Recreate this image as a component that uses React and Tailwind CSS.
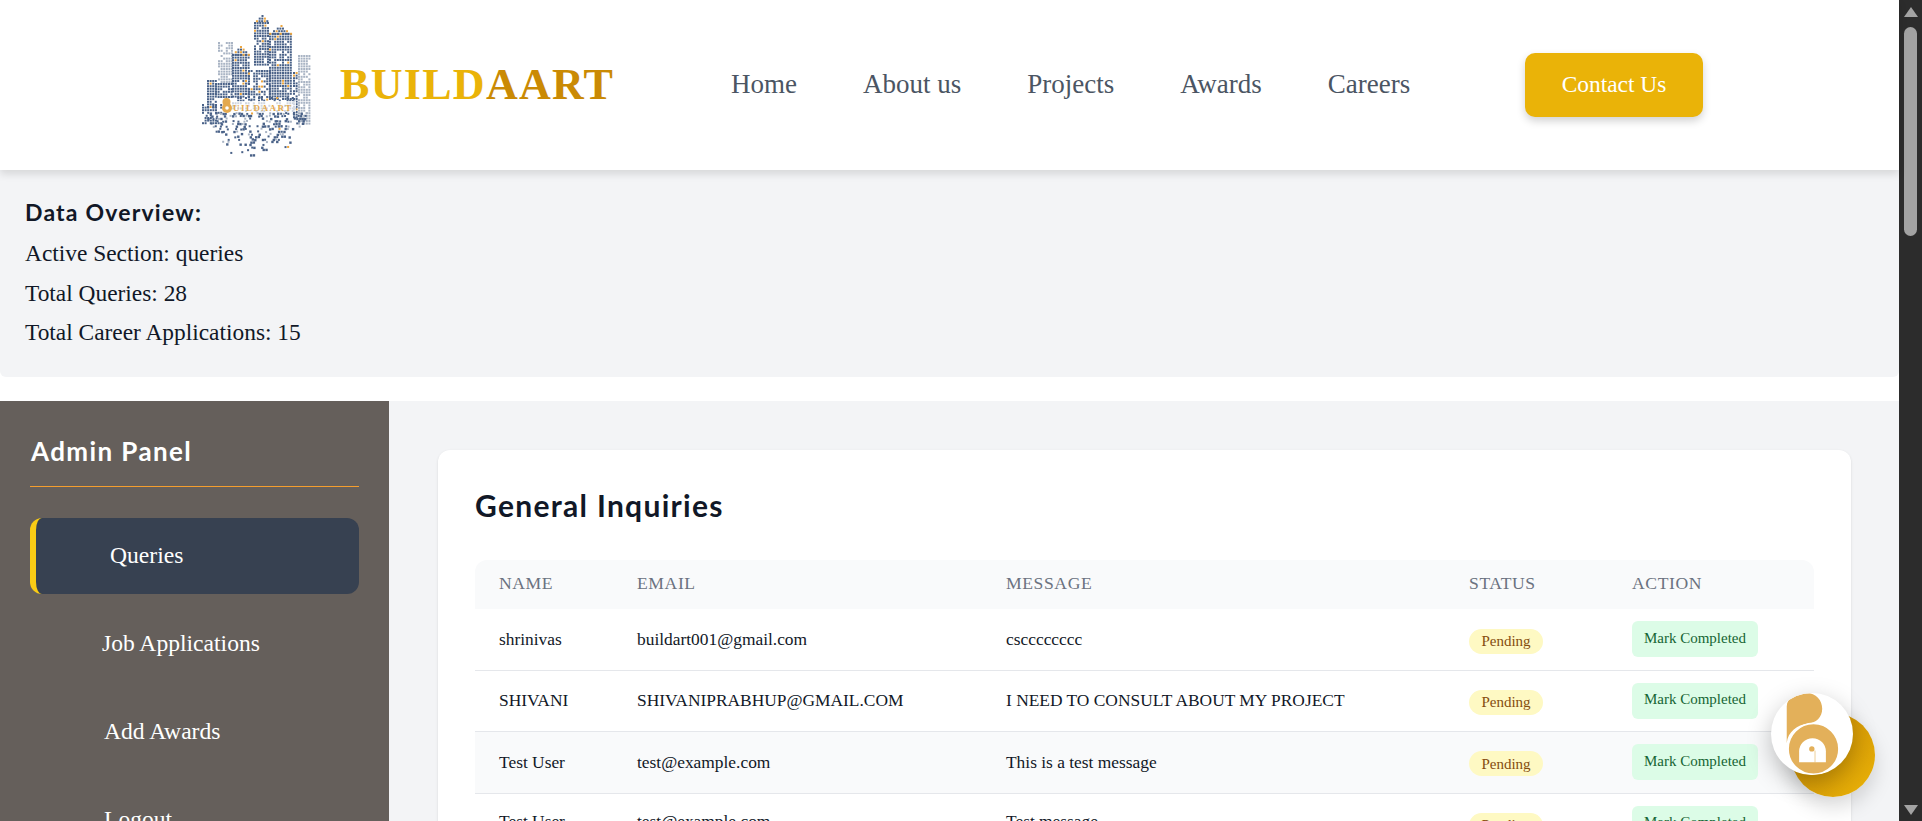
import React from "react";

function makeDots() {
  let seed = 12345;
  const rnd = () => {
    seed = (seed * 16807) % 2147483647;
    return seed / 2147483647;
  };
  const dots = [];
  const step = 2.6;
  const blue = "#4a6288";
  const pale = "#a9b4c4";
  const orange = "#eda63f";
  const blocks = [
    [218, 42, 232, 83, pale, 0.78],
    [298, 55, 311, 123, pale, 0.85],
    [254, 22, 269, 66, blue, 0.9],
    [269, 33, 292, 100, blue, 0.92],
    [232, 54, 248, 97, blue, 0.94],
    [293, 72, 298, 118, blue, 0.85],
    [215, 83, 232, 97, blue, 0.88],
    [207, 80, 215, 108, blue, 0.85],
    [248, 70, 269, 100, blue, 0.72],
    [232, 97, 296, 112, blue, 0.5],
    [202, 104, 222, 124, blue, 0.65],
  ];
  blocks.forEach(([x0, y0, x1, y1, c, d]) => {
    for (let y = y0; y < y1; y += step) {
      for (let x = x0; x < x1; x += step) {
        if (rnd() < d) {
          const isOrange = c === blue && rnd() < 0.035;
          dots.push([x, y, isOrange ? orange : c, 2]);
        }
      }
    }
  });
  [[254, 22, 269, 15], [269, 33, 292, 25], [232, 54, 248, 46]].forEach(([x0, y0, x1, top]) => {
    const mid = (x0 + x1) / 2;
    for (let y = top; y < y0; y += step) {
      const half = ((y - top) / (y0 - top)) * (x1 - x0) * 0.5;
      for (let x = mid - half; x <= mid + half; x += step) {
        dots.push([x, y, rnd() < 0.3 ? orange : blue, 2]);
      }
    }
  });
  for (let y = 112; y < 155; y += step) {
    const t = (y - 112) / 43;
    const d = 0.55 * (1 - t) + 0.06;
    const spread = 52 - t * 26;
    for (let x = 256 - spread; x < 256 + spread; x += step) {
      if (rnd() < d) {
        const r = rnd();
        dots.push([x + rnd(), y + rnd(), r < 0.03 ? orange : r < 0.2 ? pale : blue, r < 0.5 ? 2 : 2.4]);
      }
    }
  }
  return dots;
}

const DOTS = makeDots();

function CityLogo() {
  return (
    <svg width="125" height="150" viewBox="195 10 125 150" className="shrink-0">
      {DOTS.map(([x, y, c, s], i) => (
        <rect key={i} x={x} y={y} width={s} height={s} fill={c} />
      ))}
      <rect x="230" y="101" width="66" height="11" fill="#fff" opacity="0.75" />
      <circle cx="226.500" cy="102" r="4" fill="#e3a94f" />
      <circle cx="227" cy="108" r="5" fill="#e3a94f" />
      <circle cx="227" cy="108" r="1.800" fill="#fff" />
      <text x="233" y="111" fontSize="9" letterSpacing="1.500" fontFamily="Liberation Serif, serif" fontWeight="700" fill="#e3a94f">
        UILDAART
      </text>
    </svg>
  );
}

function BaLogo() {
  return (
    <svg viewBox="0 0 245 245" className="h-full w-full">
      <defs>
        <clipPath id="ba-clip">
          <circle cx="122.500" cy="122.500" r="122.500" />
        </clipPath>
      </defs>
      <g clipPath="url(#ba-clip)">
        <path d="M47 150 L47 40 C47 15 75 0 105 0 C135 0 153 22 153 47 C153 72 135 90 108 92 C80 95 50 115 47 150 Z" fill="#e3b05a" />
        <circle cx="127" cy="167" r="76" fill="#e3b05a" stroke="#fff" strokeWidth="5" />
        <path d="M84 207 L84 175 A40 40 0 0 1 164 175 L164 207 Z" fill="#fff" />
        <circle cx="122" cy="167" r="8" fill="#e3b05a" />
        <rect x="130" y="172" width="3" height="35" fill="#e3b05a" opacity="0.6" />
      </g>
    </svg>
  );
}

const NAV = ["Home", "About us", "Projects", "Awards", "Careers"];

const ROWS = [
  { name: "shrinivas", email: "buildart001@gmail.com", message: "cscccccccc", row: "h-[61px]", cell: "px-6" },
  { name: "SHIVANI", email: "SHIVANIPRABHUP@GMAIL.COM", message: "I NEED TO CONSULT ABOUT MY PROJECT", row: "h-[61px]", cell: "px-6" },
  { name: "Test User", email: "test@example.com", message: "This is a test message", row: "h-[62px] bg-[#f9fafb]", cell: "px-6" },
  { name: "Test User", email: "test@example.com", message: "Test message", row: "h-[61px]", cell: "px-6 pb-[4px]" },
];

const SIDE = [
  { label: "Job Applications", pad: "pl-[72px]" },
  { label: "Add Awards", pad: "pl-[74px]" },
  { label: "Logout", pad: "pl-[74px]" },
];

const SERIF = "font-['Liberation_Serif',serif]";
const HEAD = "font-['Lato',sans-serif]";

export default function App() {
  return (
    <div className={`relative flex h-[821px] w-[1922px] overflow-hidden bg-white ${SERIF}`}>
      <div className="flex w-[1899px] shrink-0 flex-col">
        <header className="relative z-10 flex h-[170px] shrink-0 items-center bg-white pl-[195px] shadow-[0_4px_8px_rgba(0,0,0,0.12)]">
          <CityLogo />
          <div className="ml-[20px] w-[285px] text-[44px] font-bold leading-none tracking-[1.3px]">
            <span className="text-[#eab308]">BUILD</span>
            <span className="text-[#ca8a04]">AART</span>
          </div>
          <nav className="ml-[106px] flex w-[678px] gap-[66px] whitespace-nowrap pb-[2px] text-[27px] text-[#4b5563]">
            {NAV.map((n) => (
              <span key={n} className="shrink-0">{n}</span>
            ))}
          </nav>
          <button className="ml-[116px] h-[64px] w-[178px] rounded-[10px] bg-[#eab308] text-[23.4px] text-white shadow-[0_4px_8px_rgba(0,0,0,0.18)]">
            Contact Us
          </button>
        </header>

        <section className="h-[207px] shrink-0 rounded-b-md bg-[#f3f4f6] px-[25px] pt-[29px] text-[23.4px] leading-[40px] text-[#111827]">
          <h2 className={`${HEAD} mb-[8px] text-[23px] font-bold leading-[26px] tracking-[1.2px]`}>Data Overview:</h2>
          <p>Active Section: queries</p>
          <p>Total Queries: 28</p>
          <p className="-translate-y-px">Total Career Applications: 15</p>
        </section>

        <div className="mt-[24px] flex min-h-0 flex-1 overflow-hidden">
          <aside className="w-[389px] shrink-0 bg-[#655f5b] px-[30px] pt-[34px] text-white">
            <h2 className={`${HEAD} pl-px text-[26px] font-bold leading-[32px] tracking-[1.4px]`}>Admin Panel</h2>
            <div className="mt-[19px] h-px bg-[#f59e2e]" />
            <div className="mt-[31px] flex h-[76px] items-center rounded-xl border-l-[6px] border-[#facc15] bg-[#374151] pl-[74px] text-[23.6px]">
              Queries
            </div>
            <div className="mt-[12px] flex flex-col">
              {SIDE.map((s) => (
                <div key={s.label} className={`mb-[12px] flex h-[76px] items-center text-[23.6px] ${s.pad}`}>
                  {s.label}
                </div>
              ))}
            </div>
          </aside>

          <main className="flex-1 bg-[#f3f4f6] px-[49px] pt-[49px]">
            <div className="h-[600px] rounded-xl bg-white px-[37px] pt-[37px] shadow-sm">
              <h1 className={`${HEAD} text-[30px] font-bold leading-[36px] tracking-[1.3px] text-[#111827]`}>General Inquiries</h1>
              <table className="mt-[37px] w-[1339px] table-fixed border-collapse text-left">
                <colgroup>
                  <col className="w-[138px]" />
                  <col className="w-[369px]" />
                  <col className="w-[463px]" />
                  <col className="w-[163px]" />
                  <col className="w-[206px]" />
                </colgroup>
                <thead>
                  <tr className="h-[49px] text-[17.6px] uppercase tracking-[0.6px] text-[#6b7280]">
                    {["Name", "Email", "Message", "Status", "Action"].map((h, i) => (
                      <th
                        key={h}
                        className={`bg-[#f9fafb] px-6 pb-[2px] font-normal ${i === 0 ? "rounded-tl-xl" : ""} ${i === 4 ? "rounded-tr-xl" : ""}`}
                      >
                        {h}
                      </th>
                    ))}
                  </tr>
                </thead>
                <tbody className="text-[17.4px] text-[#111827]">
                  {ROWS.map((r, i) => (
                    <tr key={i} className={`border-b border-[#e5e7eb] ${r.row}`}>
                      <td className={r.cell}>{r.name}</td>
                      <td className={r.cell}>{r.email}</td>
                      <td className={r.cell}>{r.message}</td>
                      <td className="px-6">
                        <span className="inline-flex h-[25px] w-[74px] translate-y-[1px] items-center justify-center rounded-full bg-[#fef9c3] text-[15px] text-[#854d0e]">
                          Pending
                        </span>
                      </td>
                      <td className="px-6">
                        <span className="inline-flex h-[36px] w-[126px] items-center justify-center rounded-md bg-[#dcfce7] pb-[2px] text-[15px] text-[#166534]">
                          Mark Completed
                        </span>
                      </td>
                    </tr>
                  ))}
                </tbody>
              </table>
            </div>
          </main>
        </div>
      </div>

      <div className="relative flex-1 bg-[#2c2c2c]">
        <div className="absolute left-[5px] top-[7px] h-0 w-0 border-x-[7px] border-b-[10px] border-x-transparent border-b-[#a3a3a3]" />
        <div className="absolute left-[5px] top-[27px] h-[209px] w-[13px] rounded-full bg-[#a3a3a3]" />
        <div className="absolute bottom-[6px] left-[5px] h-0 w-0 border-x-[7px] border-t-[10px] border-x-transparent border-t-[#a3a3a3]" />
      </div>

      <div className="absolute left-[1791px] top-[713px] h-[84px] w-[84px] rounded-full bg-gradient-to-br from-[#ca8a04] to-[#eab308] shadow-[0_10px_20px_rgba(0,0,0,0.15)]" />
      <div className="absolute left-[1771px] top-[693px] h-[82px] w-[82px] overflow-hidden rounded-full bg-white shadow-[0_8px_24px_rgba(0,0,0,0.25)]">
        <BaLogo />
      </div>
    </div>
  );
}
